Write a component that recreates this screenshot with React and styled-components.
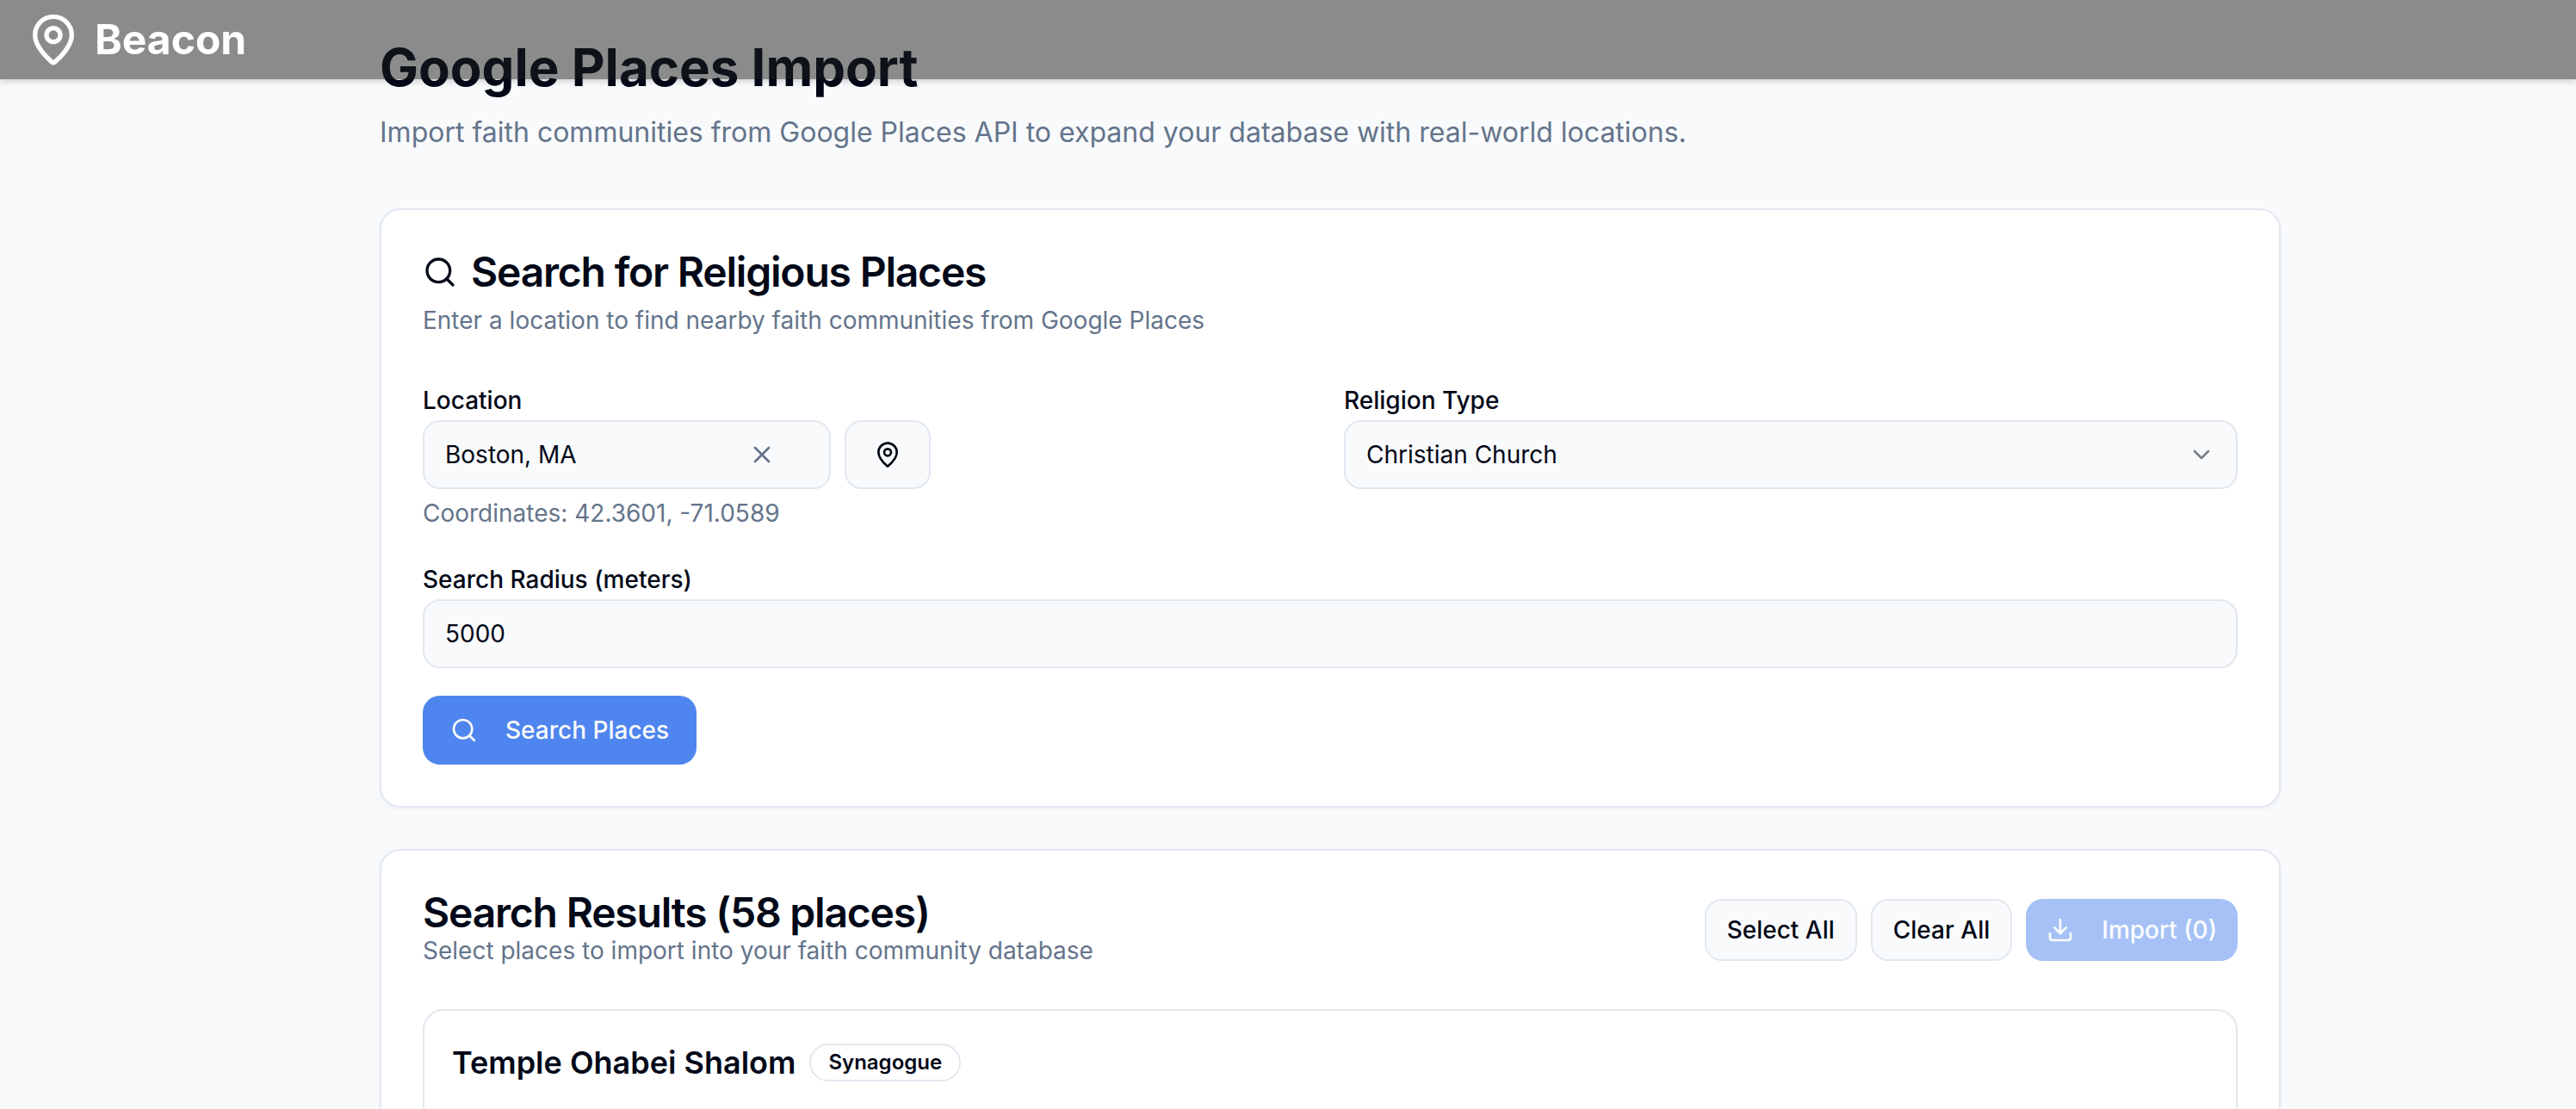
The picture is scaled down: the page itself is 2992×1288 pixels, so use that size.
import React from 'react';
import styled, { createGlobalStyle, css } from 'styled-components';
import { MapPin, Search, X, ChevronDown, Download } from 'lucide-react';

const color = {
  page: '#f9fafc',
  surface: '#ffffff',
  ink: '#020817',
  muted: '#64748b',
  line: '#e2e8f0',
  primary: '#4f85ee',
  onPrimary: '#f8fafc',
};

const GlobalStyle = createGlobalStyle`
  *, *::before, *::after { box-sizing: border-box; }
  html { scrollbar-width: none; }
  body {
    margin: 0;
    background: ${color.page};
    color: ${color.ink};
    font-family: Inter, "Liberation Sans", sans-serif;
    font-size: 32px;
    line-height: 48px;
    -webkit-font-smoothing: antialiased;
  }
  h1, h2, h3, p { margin: 0; }
  button, input, select { font: inherit; color: inherit; }
  svg { display: block; flex-shrink: 0; }
`;

const TopBar = styled.header`
  position: fixed;
  inset: 0 0 auto 0;
  z-index: 10;
  display: flex;
  align-items: center;
  height: 92px;
  padding: 0 30px;
  background: rgba(28, 28, 26, 0.503);
  box-shadow: 0 2px 8px rgba(0, 0, 0, 0.2);
`;

const Brand = styled.a`
  display: flex;
  align-items: center;
  gap: 16px;
  color: #ffffff;
  font-size: 48px;
  line-height: 64px;
  font-weight: 700;
  text-decoration: none;
`;

const Main = styled.main`
  height: 100vh;
  overflow: hidden;
  padding-left: 98px;
`;

const Container = styled.div`
  display: flex;
  flex-direction: column;
  gap: 48px;
  max-width: 2304px;
  margin: 0 auto;
  padding: 42px 48px 48px;
`;

const PageHeading = styled.div`
  display: flex;
  flex-direction: column;
  gap: 16px;
  padding-bottom: 16px;
`;

const PageTitle = styled.h1`
  font-size: 60px;
  line-height: 72px;
  font-weight: 700;
`;

const Lead = styled.p`
  color: ${color.muted};
`;

const Card = styled.section`
  display: flex;
  flex-direction: column;
  gap: 48px;
  padding: 48px;
  background: ${color.surface};
  border: 2px solid ${color.line};
  border-radius: 24px;
  box-shadow: 0 2px 4px rgba(0, 0, 0, 0.05);
`;

const CardHeader = styled.div`
  display: flex;
  flex-direction: column;
  gap: ${({ $gap }) => $gap || '0'};
`;

const CardTitle = styled.h2`
  display: flex;
  align-items: center;
  gap: 16px;
  font-size: 48px;
  line-height: 48px;
  font-weight: 600;
  letter-spacing: -0.025em;
`;

const SmallText = styled.p`
  color: ${color.muted};
  font-size: 28px;
  line-height: 40px;
`;

const Form = styled.form`
  display: flex;
  flex-direction: column;
  align-items: flex-start;
  gap: 32px;
`;

const FieldGrid = styled.div`
  display: grid;
  grid-template-columns: 1fr 1fr;
  gap: 32px;
  width: 100%;
`;

const Field = styled.div`
  width: 100%;
`;

const Label = styled.label`
  font-size: 28px;
  line-height: 28px;
  font-weight: 500;
`;

const LocationRow = styled.div`
  display: flex;
  gap: 16px;
  margin-bottom: 8px;
`;

const control = css`
  height: 80px;
  background: ${color.page};
  border: 2px solid ${color.line};
  border-radius: 20px;
  font-size: 28px;
  line-height: 40px;
`;

const TextBox = styled.div`
  ${control}
  display: flex;
  align-items: center;
  width: ${({ $width }) => $width || '100%'};
  padding: 0 ${({ $end }) => $end || '24px'} 0 24px;
`;

const TextInput = styled.input`
  flex: 1;
  min-width: 0;
  padding: 0;
  background: none;
  border: 0;
  outline: 0;
`;

const ClearButton = styled.button`
  display: flex;
  padding: 0;
  background: none;
  border: 0;
  color: ${color.muted};
`;

const LocateButton = styled.button`
  ${control}
  display: flex;
  align-items: center;
  justify-content: center;
  width: 100px;
  padding: 0;
`;

const SelectBox = styled.div`
  display: grid;
  align-items: center;

  > * { grid-area: 1 / 1; }
  > svg {
    justify-self: end;
    margin-right: 26px;
    opacity: 0.5;
    pointer-events: none;
  }
`;

const Select = styled.select`
  ${control}
  appearance: none;
  width: 100%;
  padding: 0 64px 0 24px;
  outline: 0;
`;

const PrimaryButton = styled.button`
  display: flex;
  align-items: center;
  gap: 32px;
  height: ${({ $compact }) => ($compact ? '72px' : '80px')};
  padding: 0 ${({ $compact }) => ($compact ? '24px' : '32px')};
  background: ${color.primary};
  border: 0;
  border-radius: 20px;
  color: ${color.onPrimary};
  font-size: 28px;
  line-height: 40px;
  font-weight: 500;

  &:disabled { opacity: 0.5; }
`;

const OutlineButton = styled.button`
  ${control}
  height: 72px;
  padding: 0 24px;
  font-weight: 500;
`;

const ResultsHeader = styled.div`
  display: flex;
  align-items: center;
  justify-content: space-between;
`;

const Actions = styled.div`
  display: flex;
  gap: 16px;
`;

const PlaceCard = styled.article`
  display: flex;
  align-items: flex-start;
  gap: 16px;
  min-height: 240px;
  padding: 32px;
  border: 2px solid ${color.line};
  border-radius: 24px;
`;

const PlaceHeading = styled.div`
  display: flex;
  align-items: center;
  gap: 16px;
`;

const PlaceName = styled.h3`
  font-size: 36px;
  line-height: 56px;
  font-weight: 600;
`;

const Badge = styled.span`
  padding: 4px 20px;
  border: 2px solid ${color.line};
  border-radius: 22px;
  font-size: 24px;
  line-height: 32px;
  font-weight: 600;
`;

export default function App() {
  return (
    <>
      <GlobalStyle />
      <TopBar>
        <Brand href="#">
          <MapPin size={64} />
          Beacon
        </Brand>
      </TopBar>
      <Main>
        <Container>
          <PageHeading>
            <PageTitle>Google Places Import</PageTitle>
            <Lead>
              Import faith communities from Google Places API to expand your database with real-world locations.
            </Lead>
          </PageHeading>

          <Card>
            <CardHeader $gap="12px">
              <CardTitle>
                <Search size={40} />
                Search for Religious Places
              </CardTitle>
              <SmallText>Enter a location to find nearby faith communities from Google Places</SmallText>
            </CardHeader>
            <Form onSubmit={(event) => event.preventDefault()}>
              <FieldGrid>
                <Field>
                  <Label htmlFor="location">Location</Label>
                  <LocationRow>
                    <TextBox $width="474px" $end="62px">
                      <TextInput id="location" type="text" defaultValue="Boston, MA" />
                      <ClearButton type="button" aria-label="Clear location">
                        <X size={32} />
                      </ClearButton>
                    </TextBox>
                    <LocateButton type="button" aria-label="Use current location">
                      <MapPin size={32} />
                    </LocateButton>
                  </LocationRow>
                  <SmallText>Coordinates: 42.3601, -71.0589</SmallText>
                </Field>
                <Field>
                  <Label htmlFor="religion">Religion Type</Label>
                  <SelectBox>
                    <Select id="religion" defaultValue="church">
                      <option value="church">Christian Church</option>
                      <option value="synagogue">Synagogue</option>
                    </Select>
                    <ChevronDown size={32} />
                  </SelectBox>
                </Field>
              </FieldGrid>
              <Field>
                <Label htmlFor="radius">Search Radius (meters)</Label>
                <TextBox>
                  <TextInput id="radius" type="text" inputMode="numeric" defaultValue="5000" />
                </TextBox>
              </Field>
              <PrimaryButton type="submit">
                <Search size={32} />
                Search Places
              </PrimaryButton>
            </Form>
          </Card>

          <Card>
            <ResultsHeader>
              <CardHeader>
                <CardTitle>Search Results (58 places)</CardTitle>
                <SmallText>Select places to import into your faith community database</SmallText>
              </CardHeader>
              <Actions>
                <OutlineButton type="button">Select All</OutlineButton>
                <OutlineButton type="button">Clear All</OutlineButton>
                <PrimaryButton type="button" $compact disabled>
                  <Download size={32} />
                  Import (0)
                </PrimaryButton>
              </Actions>
            </ResultsHeader>
            <PlaceCard>
              <PlaceHeading>
                <PlaceName>Temple Ohabei Shalom</PlaceName>
                <Badge>Synagogue</Badge>
              </PlaceHeading>
            </PlaceCard>
          </Card>
        </Container>
      </Main>
    </>
  );
}
